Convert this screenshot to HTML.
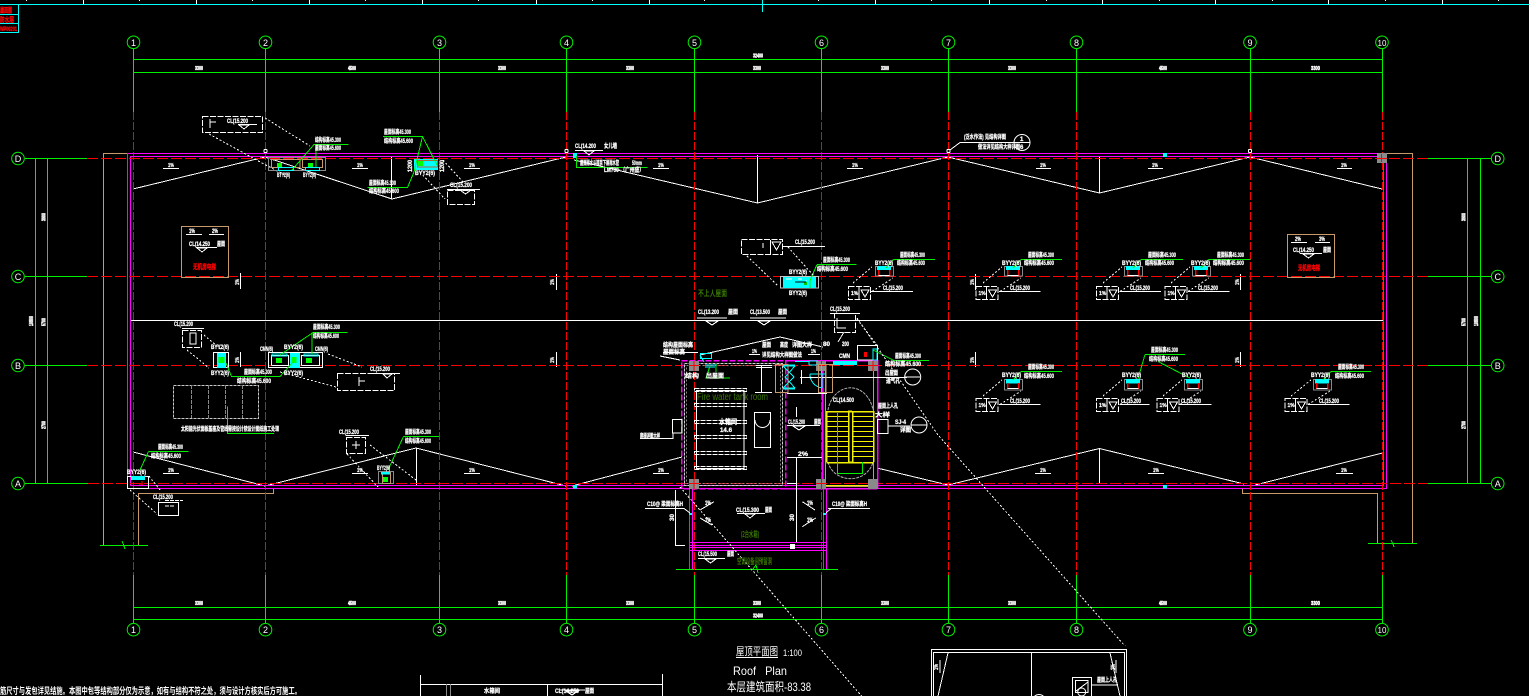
<!DOCTYPE html>
<html><head><meta charset="utf-8"><title>Roof Plan</title>
<style>
html,body{margin:0;padding:0;background:#000;overflow:hidden}
svg{display:block;position:absolute;left:0;top:0}
.t{font:bold 6px "Liberation Sans","Noto Sans CJK SC",sans-serif;fill:#fff;stroke:#fff;stroke-width:.25}
.n{font:9px "Liberation Sans",sans-serif;fill:#fff;text-anchor:middle}
.o{font:bold 8px "Liberation Sans","Noto Sans CJK SC",sans-serif;fill:#3a7800}
.r{font:bold 7px "Liberation Sans","Noto Sans CJK SC",sans-serif;fill:#f00;stroke:#f00;stroke-width:.3}
.w{fill:none;stroke:#fff}.g{fill:none;stroke:#00f000}.m{fill:none;stroke:#f0f}.c{fill:none;stroke:#0ff}.b{fill:none;stroke:#c89a6a}.y{fill:none;stroke:#f0f000}.a{fill:none;stroke:#8a8a8a}
.d{stroke-dasharray:2 2}.bx{stroke-dasharray:6 1.5}
.rd{fill:none;stroke:#f00;stroke-dasharray:8 2}.rh{fill:none;stroke:#f00;stroke-dasharray:11 3}
</style></head><body>
<svg width="1529" height="696" viewBox="0 0 1529 696" xmlns="http://www.w3.org/2000/svg" shape-rendering="crispEdges">
<defs>
<g id="rainT"><rect x=".5" y=".5" width="18" height="9.5" class="a"/><rect x="2" y="0" width="14" height="4" fill="#0ff"/><path d="M3.5 4v5.5M14.5 4v5.5" stroke="#f00" stroke-width="1.5"/><path d="M3.5 9.5H14.5" stroke="#fff"/></g>
<g id="rainB"><rect x=".5" y=".5" width="18" height="10.5" class="a"/><rect x="2" y="0" width="14" height="4.5" fill="#0ff"/><path d="M3.5 4v6M14.5 4v6" stroke="#f00" stroke-width="1.5"/><path d="M3.5 9.5H14.5" stroke="#fff"/></g>
<g id="box"><rect x=".5" y=".5" width="22" height="13" class="w bx"/><path d="M11 1V13M13 4H21L17 11Z" class="w"/><text class="t" x="3" y="9" style="font-size:5px">1%</text></g>
</defs>

<!-- ruler -->
<path d="M0 4.5H1529" class="c"/>
<path d="M83.5 0V4M196.5 0V4M309.5 0V4M422.5 0V4M536.5 0V4M649.5 0V4M875.5 0V4M989.5 0V4M1102.5 0V4M1215.5 0V4M1328.5 0V4M1442.5 0V4M26.5 0V1M139.5 0V1M252.5 0V1M365.5 0V1M478.5 0V1M592.5 0V1M704.5 0V1M818.5 0V1M931.5 0V1M1046.5 0V1M1159.5 0V1M1272.5 0V1M1385.5 0V1M1498.5 0V1" class="w"/>
<path d="M762.5 0V12" class="c"/>
<path d="M18.5 4V32.5H0M0 14.5H18.5M0 23.5H18.5" class="c"/>
<text x="0" y="12.500" class="r" textLength="12" lengthAdjust="spacingAndGlyphs">屋面图</text>
<text x="0" y="22" class="r" textLength="14" lengthAdjust="spacingAndGlyphs">防水层</text>
<text x="0" y="31" class="r" style="font-size:6px" textLength="17" lengthAdjust="spacingAndGlyphs">WP00201</text>

<!-- tan outlines -->
<path d="M130 153.5H103.5V545M1387 153.5H1412.5V543M138.5 545V493.5H273.5V488M1242.5 488V493.5H1377.5V543" class="b"/>
<path d="M100 545.5H148M1368 543.5H1417" class="g"/>
<path d="M122 541L124 546L125 549M1391 540L1393 544L1394 547" class="g"/>

<!-- green grid -->
<path d="M133.5 48V112M265.5 48V112M439.5 48V112M566.5 48V112M694.5 48V112M821.5 48V112M948.5 48V112M1076.5 48V112M1250.5 48V112M1382.5 48V112" class="g"/>
<path d="M133.5 575V623M265.5 575V623M439.5 575V623M566.5 575V623M694.5 575V623M821.5 575V623M948.5 575V623M1076.5 575V623M1250.5 575V623M1382.5 575V623" class="g"/>
<path d="M133 59.5H1382M133 72.5H1382M133 607.5H1382M133 619.5H1382" class="g"/>
<path d="M25 158.5H87M25 276.5H87M25 365.5H87M25 483.5H88M1428 158.5H1491M1428 276.5H1491M1428 365.5H1491M1428 483.5H1491" class="g"/>
<path d="M35.5 158V483M47.5 158V483M1467.5 158V483M1480.5 158V483" class="g"/>
<path d="M676 569.5H838M753 569L756 565L758 573" class="g"/>

<g class="g" shape-rendering="auto" stroke-width="1">
<circle cx="133.5" cy="42.3" r="6.3"/><circle cx="265.5" cy="42.3" r="6.3"/><circle cx="439.5" cy="42.3" r="6.3"/><circle cx="566.5" cy="42.3" r="6.3"/><circle cx="694.5" cy="42.3" r="6.3"/><circle cx="821.5" cy="42.3" r="6.3"/><circle cx="948.5" cy="42.3" r="6.3"/><circle cx="1076.5" cy="42.3" r="6.3"/><circle cx="1250" cy="42.3" r="6.3"/><circle cx="1382" cy="42.3" r="6.3"/>
<circle cx="133.5" cy="629.7" r="6.3"/><circle cx="265.5" cy="629.7" r="6.3"/><circle cx="439.5" cy="629.7" r="6.3"/><circle cx="566.5" cy="629.7" r="6.3"/><circle cx="694.5" cy="629.7" r="6.3"/><circle cx="821.5" cy="629.7" r="6.3"/><circle cx="948.5" cy="629.7" r="6.3"/><circle cx="1076.5" cy="629.7" r="6.3"/><circle cx="1250" cy="629.7" r="6.3"/><circle cx="1382" cy="629.7" r="6.3"/>
<circle cx="18" cy="158.5" r="6.3"/><circle cx="18" cy="276.5" r="6.3"/><circle cx="18" cy="365.5" r="6.3"/><circle cx="18" cy="483.5" r="6.3"/>
<circle cx="1497.7" cy="158.5" r="6.3"/><circle cx="1497.7" cy="276.5" r="6.3"/><circle cx="1497.7" cy="365.5" r="6.3"/><circle cx="1497.7" cy="483.5" r="6.3"/>
</g>
<g class="n" shape-rendering="auto">
<text x="133.5" y="46">1</text><text x="265.5" y="46">2</text><text x="439.5" y="46">3</text><text x="566.5" y="46">4</text><text x="694.5" y="46">5</text><text x="821.5" y="46">6</text><text x="948.5" y="46">7</text><text x="1076.5" y="46">8</text><text x="1250" y="46">9</text><text x="1382" y="46" style="font-size:8px">10</text>
<text x="133.5" y="633">1</text><text x="265.5" y="633">2</text><text x="439.5" y="633">3</text><text x="566.5" y="633">4</text><text x="694.5" y="633">5</text><text x="821.5" y="633">6</text><text x="948.5" y="633">7</text><text x="1076.5" y="633">8</text><text x="1250" y="633">9</text><text x="1382" y="633" style="font-size:8px">10</text>
<text x="18" y="162">D</text><text x="18" y="280">C</text><text x="18" y="369">B</text><text x="18" y="487">A</text>
<text x="1497.7" y="162">D</text><text x="1497.7" y="280">C</text><text x="1497.7" y="369">B</text><text x="1497.7" y="487">A</text>
</g>

<!-- dim labels -->
<g class="t" shape-rendering="auto" style="font-size:5.5px;stroke-width:.5" lengthAdjust="spacingAndGlyphs">
<text x="195" y="70" textLength="8" lengthAdjust="spacingAndGlyphs">3300</text><text x="348" y="70" textLength="8" lengthAdjust="spacingAndGlyphs">4500</text><text x="498" y="70" textLength="8" lengthAdjust="spacingAndGlyphs">3300</text><text x="626" y="70" textLength="8" lengthAdjust="spacingAndGlyphs">3300</text><text x="753" y="70" textLength="8" lengthAdjust="spacingAndGlyphs">3300</text><text x="881" y="70" textLength="8" lengthAdjust="spacingAndGlyphs">3300</text><text x="1008" y="70" textLength="8" lengthAdjust="spacingAndGlyphs">3300</text><text x="1159" y="70" textLength="8" lengthAdjust="spacingAndGlyphs">4500</text><text x="1311" y="70" textLength="9" lengthAdjust="spacingAndGlyphs">3300</text><text x="753" y="57.500" textLength="10" lengthAdjust="spacingAndGlyphs">32400</text>
<text x="195" y="605" textLength="8" lengthAdjust="spacingAndGlyphs">3300</text><text x="348" y="605" textLength="8" lengthAdjust="spacingAndGlyphs">4500</text><text x="498" y="605" textLength="8" lengthAdjust="spacingAndGlyphs">3300</text><text x="626" y="605" textLength="8" lengthAdjust="spacingAndGlyphs">3300</text><text x="753" y="605" textLength="8" lengthAdjust="spacingAndGlyphs">3300</text><text x="881" y="605" textLength="8" lengthAdjust="spacingAndGlyphs">3300</text><text x="1008" y="605" textLength="8" lengthAdjust="spacingAndGlyphs">3300</text><text x="1159" y="605" textLength="8" lengthAdjust="spacingAndGlyphs">4500</text><text x="1311" y="605" textLength="9" lengthAdjust="spacingAndGlyphs">3300</text><text x="753" y="617.500" textLength="10" lengthAdjust="spacingAndGlyphs">32400</text>
<text transform="translate(45.500 221) rotate(-90)" textLength="8" lengthAdjust="spacingAndGlyphs">3900</text><text transform="translate(45.500 326) rotate(-90)" textLength="8" lengthAdjust="spacingAndGlyphs">5700</text><text transform="translate(45.500 429) rotate(-90)" textLength="8" lengthAdjust="spacingAndGlyphs">2700</text><text transform="translate(33 326) rotate(-90)" textLength="10" lengthAdjust="spacingAndGlyphs">10800</text>
<text transform="translate(1465.500 221) rotate(-90)" textLength="8" lengthAdjust="spacingAndGlyphs">3900</text><text transform="translate(1465.500 326) rotate(-90)" textLength="8" lengthAdjust="spacingAndGlyphs">5700</text><text transform="translate(1465.500 429) rotate(-90)" textLength="8" lengthAdjust="spacingAndGlyphs">2700</text><text transform="translate(1478 326) rotate(-90)" textLength="10" lengthAdjust="spacingAndGlyphs">10800</text>
</g>

<!-- white ridge lines -->
<path d="M131 320.5H1383" class="w"/>
<path d="M133 189L265 157L392 199L566 157M574 160L757.5 203L948 157L1099.5 193L1250 157L1382 189" class="w"/>
<path d="M133 452L265 486L416 448L566 486M572 486L682 457M877 468L948 485L1099.5 448.5L1244 484M1255 485L1382.5 453" class="w"/>
<path d="M700 355L780 337L823 347" class="w"/>
<path d="M391.5 157V199M757.5 155V203M1099.5 157V193M416.5 448V486M1099.5 448V483" class="w"/>
<!-- slope labels -->
<path d="M163 168.5H179M352 168.5H368M464 168.5H480M653 168.5H669M847 168.5H863M1036 168.5H1051M1148 168.5H1163M1337 168.5H1352M163 473.5H179M352 473.5H368M464 473.5H480M653 473.5H669M1035 473.5H1051M1148 473.5H1164M1336 473.5H1353M749 354.500H760M808 354.500H820" class="w"/>
<g class="t" shape-rendering="auto" style="font-size:5.5px">
<text x="168" y="167" textLength="6" lengthAdjust="spacingAndGlyphs">1%</text><text x="357" y="167" textLength="6" lengthAdjust="spacingAndGlyphs">1%</text><text x="469" y="167" textLength="6" lengthAdjust="spacingAndGlyphs">1%</text><text x="658" y="167" textLength="6" lengthAdjust="spacingAndGlyphs">1%</text><text x="852" y="167" textLength="6" lengthAdjust="spacingAndGlyphs">1%</text><text x="1040" y="167" textLength="6" lengthAdjust="spacingAndGlyphs">1%</text><text x="1152" y="167" textLength="6" lengthAdjust="spacingAndGlyphs">1%</text><text x="1341" y="167" textLength="6" lengthAdjust="spacingAndGlyphs">1%</text><text x="168" y="472" textLength="6" lengthAdjust="spacingAndGlyphs">1%</text><text x="357" y="472" textLength="6" lengthAdjust="spacingAndGlyphs">1%</text><text x="469" y="472" textLength="6" lengthAdjust="spacingAndGlyphs">1%</text><text x="658" y="472" textLength="6" lengthAdjust="spacingAndGlyphs">1%</text><text x="1040" y="472" textLength="6" lengthAdjust="spacingAndGlyphs">1%</text><text x="1153" y="472" textLength="6" lengthAdjust="spacingAndGlyphs">1%</text><text x="1341" y="472" textLength="6" lengthAdjust="spacingAndGlyphs">1%</text>
<text x="752" y="353" textLength="5" lengthAdjust="spacingAndGlyphs">1%</text><text x="811" y="353" textLength="5" lengthAdjust="spacingAndGlyphs">1%</text>
<text transform="translate(239 285) rotate(-90)" textLength="6" lengthAdjust="spacingAndGlyphs">1%</text><text transform="translate(239 363) rotate(-90)" textLength="6" lengthAdjust="spacingAndGlyphs">1%</text><text transform="translate(554 285) rotate(-90)" textLength="6" lengthAdjust="spacingAndGlyphs">1%</text><text transform="translate(554 363) rotate(-90)" textLength="6" lengthAdjust="spacingAndGlyphs">1%</text><text transform="translate(974 285) rotate(-90)" textLength="6" lengthAdjust="spacingAndGlyphs">1%</text><text transform="translate(974 363) rotate(-90)" textLength="6" lengthAdjust="spacingAndGlyphs">1%</text><text transform="translate(1239 285) rotate(-90)" textLength="6" lengthAdjust="spacingAndGlyphs">1%</text><text transform="translate(1239 363) rotate(-90)" textLength="6" lengthAdjust="spacingAndGlyphs">1%</text>
</g>
<path d="M240.5 273V289M240.5 352V367M556.5 274V290M556.5 352V367M975.5 274V290M975.5 352V367M1240.5 274V290M1240.5 352V367" class="w"/>

<!-- magenta outline -->
<path d="M127.5 488.5V153.5H1386.5V488.5H127.5M130.5 485.5V156.5H1383.5V485.5H130.5" class="m"/>
<!-- red lines -->
<path d="M87 158.5H1428M87 276.5H1428M87 365.5H1428M88 483.5H1428" class="rh"/>
<path d="M133.5 112V575M265.5 112V575M439.5 112V575M566.5 112V575M694.5 112V575M821.5 112V575M948.5 112V575M1076.5 112V575M1250.5 112V575M1382.5 112V575" class="rd"/>

<!-- top-left detail -->
<rect x="202.5" y="116.5" width="60" height="16" class="w bx"/>
<path d="M238 124.5H257M239 125H249L244 129ZM210 119V128M210 122H216" class="w"/>
<text class="t" x="227" y="123" textLength="21" lengthAdjust="spacingAndGlyphs" shape-rendering="auto">CL(15.200</text>
<path d="M265 118L310 146M209 134L262 163L285 175" class="w d"/>
<circle cx="265.5" cy="151" r="1.7" class="w"/><circle cx="566.5" cy="151" r="1.7" class="w"/><circle cx="948.5" cy="151" r="1.7" class="w"/><circle cx="1250" cy="151" r="1.7" class="w"/>
<rect x="268.5" y="157.5" width="57" height="13" class="a"/>
<rect x="271.5" y="159.5" width="28.5" height="8" class="b"/><rect x="302.5" y="159.5" width="20" height="8" class="b"/>
<rect x="278.5" y="167.5" width="15" height="3" class="c"/><rect x="305.5" y="167.5" width="14" height="3" class="c"/>
<rect x="277" y="163" width="5" height="4" fill="#0f0"/><rect x="308" y="163" width="5" height="4" fill="#0f0"/>
<path d="M292 170L314 144.5H348.5M316 144.5V167" class="g"/>
<rect x="414" y="159" width="24" height="11" fill="#0ff"/><rect x="417.5" y="160.5" width="20" height="6.5" class="b" style="stroke:#a06a3a"/>
<rect x="418" y="161" width="5" height="5" fill="#0f0"/>
<path d="M383 136.5H422.5L414 172L407.5 187.5H367.5M422.5 136.5L437 165" class="g"/>
<path d="M443 160L463 182M420 172L445 199" class="w d"/>
<rect x="447.5" y="190.5" width="27" height="14" class="w bx"/>
<path d="M447 189.5H480M460 190H471L465.5 194Z" class="w"/>

<!-- near grid 4 top -->
<rect x="573" y="153" width="4" height="5" fill="#0ff"/>
<rect x="1163" y="153" width="4" height="4" fill="#0ff"/><rect x="1163" y="485" width="4" height="3.5" fill="#0ff"/><rect x="573" y="485" width="4" height="3.5" fill="#0ff"/>
<path d="M576.5 156V167.5H647.5" class="g"/>
<path d="M575 150.5H603M584 151H594L589 155Z" class="w"/>
<!-- near 7 callout -->
<path d="M950 150L960 142.5H1014" class="w"/>
<g shape-rendering="auto"><circle cx="1022" cy="142.5" r="8" class="w"/><path d="M1014 142.5H1030" class="w"/></g>

<!-- column top right -->
<rect x="1377" y="153" width="10" height="10" fill="#8a8a8a"/><path d="M1381.5 154V162M1377 158.5H1387" stroke="#f00"/>

<!-- left tan box -->
<rect x="181.5" y="226.5" width="47" height="51" class="b"/>
<path d="M186 234.5H202M209 234.5H224M196 247.5H217M197 248H207L202 252Z" class="w"/>
<rect x="1287.5" y="234.5" width="47" height="43" class="b"/>
<path d="M1291 242.5H1307M1315 242.5H1330M1300 253.5H1322M1303 254H1314L1308.5 258Z" class="w"/>

<!-- mid-left B -->
<rect x="182.5" y="330.5" width="19" height="17" class="w bx"/>
<path d="M182 328.5H204M190 333V344H196V333Z" class="w"/>
<rect x="213.5" y="352.5" width="15" height="15" class="w"/><rect x="217" y="353" width="9" height="15" fill="#0ff"/><rect x="218.5" y="357" width="6" height="6" fill="#0f0"/>
<path d="M204 335L222 350M187 350L209 368" class="w d"/>
<rect x="268.5" y="352.5" width="54" height="15" class="w"/><rect x="290" y="353" width="10" height="15" fill="#0ff"/>
<rect x="271.5" y="355.5" width="17" height="10" class="w"/><rect x="301.5" y="355.5" width="18" height="10" class="w"/>
<rect x="272" y="354" width="15" height="2" class="c"/><rect x="304" y="354" width="14" height="2" class="c"/>
<rect x="276" y="358" width="6" height="5" fill="#0f0"/><rect x="291.500" y="357" width="5" height="6" fill="#0f0"/><rect x="306" y="358" width="6" height="5" fill="#0f0"/>
<path d="M313 332.5H347.5M313 332.5L280 355M312 332.5V354M226 363L231.500 376.500H280L293 362" class="g"/>
<rect x="337.5" y="373.500" width="57" height="17" class="w bx"/>
<path d="M370 373.500H400M359 377V386M359 381H365M383 374H392L387 378Z" class="w"/>
<path d="M328 354L362 367M280 372L336 387" class="w d"/>
<rect x="173.500" y="385.500" width="85" height="33" class="a d" style="stroke:#c8c8c8;stroke-dasharray:3 1"/>
<path d="M191.500 385V418M208.500 385V418M225.500 385V418M242.500 385V418" class="a" style="stroke-dasharray:4 1"/>
<path d="M227.500 406.500V433.500H274" class="g"/>

<!-- lower-left -->
<path d="M148.500 451.500H188.500M148.500 451.500L140 470" class="g"/>
<rect x="127.500" y="476.500" width="21" height="12" class="w"/><rect x="131" y="476" width="14" height="4" fill="#0ff"/>
<path d="M142 481V485M139 484H143" stroke="#f00"/>
<path d="M149 476L160 490M130 490L157 514" class="w d"/>
<rect x="158.500" y="502.500" width="20" height="13" class="w"/>
<path d="M165 500.500H183M165 506H175" class="w" stroke-dasharray="4 1"/>
<rect x="346.500" y="437.500" width="19" height="16" class="w bx"/>
<path d="M346 435.500H369M356 441V449M352 445H360" class="w"/>
<path d="M370 445L416 480M347 454L378 487" class="w d"/>
<rect x="378.500" y="471.500" width="15" height="12" class="a"/><rect x="382.500" y="472.500" width="8" height="11" class="b"/><rect x="381" y="472" width="9" height="2.500" fill="#0ff"/><rect x="383" y="477" width="5" height="5" fill="#0f0"/>
<path d="M403.500 436.500H439M403.500 436.500L388 470" class="g"/>

<!-- centre upper -->
<rect x="741.500" y="239.500" width="41" height="15" class="w bx"/>
<path d="M770.500 240V254M772 242H781L776.500 250ZM782 246.500H825M763 243V248" class="w"/>
<rect x="780.500" y="276.500" width="38" height="11.500" class="a" style="stroke:#c8c8c8"/><rect x="783" y="277" width="33" height="11" fill="#0ff"/>
<path d="M786 279H792M798 279H802M806 280V281" stroke="#fff"/><rect x="804" y="282" width="3" height="3" fill="#0c0"/>
<path d="M795 282H806" stroke="#000"/>
<path d="M817 264.500H856.500M817 264.500L810 281V288M817 264.500L811 278" class="g"/>
<path d="M747 256L778 286M788 247L813 275" class="w d"/>
<use href="#rainT" x="875" y="266"/>
<use href="#box" x="848" y="286"/>
<path d="M871 291.500H913" class="w"/><path d="M893.500 259.500H935M893.500 259.500L886 268" class="g"/>
<path d="M853 283L872 267M872 291.500L893 278" class="w d"/>

<!-- right groups row C -->
<use href="#rainT" x="1004" y="266"/><use href="#rainT" x="1124" y="266"/><use href="#rainT" x="1192" y="266"/>
<use href="#box" x="975.500" y="286"/><use href="#box" x="1096" y="286"/><use href="#box" x="1164.500" y="286"/>
<path d="M999 291.500H1040.500M1119.500 291.500H1161M1188 291.500H1229.500" class="w"/>
<path d="M983 283L1002 267M1000 291.500L1021 278M1103 283L1122 267M1120 291.500L1141 278M1171 283L1190 267M1188 291.500L1209 278" class="w d"/>
<path d="M1021 259.500H1062M1021 259.500L1013 268M1141 259.500H1183M1141 259.500L1133 268M1208.500 259.500H1250.500M1208.500 259.500L1201 268" class="g"/>
<!-- right groups row B -->
<use href="#rainB" x="1004" y="379"/><use href="#rainB" x="1124" y="379"/><use href="#rainB" x="1184" y="379"/><use href="#rainB" x="1313" y="379"/>
<use href="#box" x="975.500" y="398"/><use href="#box" x="1096" y="398"/><use href="#box" x="1156.500" y="398"/><use href="#box" x="1284.500" y="398"/>
<path d="M999 404.500H1040.500M1119.500 404.500H1149.500M1179 404.500H1211.500M1308 404.500H1349.500" class="w"/>
<path d="M983 396L1002 380M1000 404.500L1021 391M1103 396L1122 380M1120 404.500L1141 391M1163 396L1182 380M1180 404.500L1201 391M1291 396L1311 380M1308 404.500L1330 391" class="w d"/>
<path d="M1021 371.500H1062M1021 371.500L1013 380M1331 371.500H1371M1331 371.500L1323 380M1145 354.500H1185M1145 354.500L1138 379M1158 361.500L1182 374L1190 378" class="g"/>

<!-- building -->
<rect x="681.500" y="360.500" width="104" height="128" class="m" stroke-dasharray="6 2" stroke-width="1.500"/>
<rect x="684.500" y="363.500" width="98" height="122" class="w" stroke-dasharray="3 1" style="stroke:#d0d0d0"/>
<rect x="686.500" y="365.500" width="94" height="118" class="a" stroke-dasharray="2 2"/>
<path d="M822.500 361V489M877.500 360V489M785 488.500H877M785 360.500H877" class="m" stroke-width="1.500"/>
<path d="M825.500 362V486M873.500 362V486M826 486.500H874" class="a" style="stroke:#c89a6a"/>
<path d="M826 485.500H868" class="y"/>
<g shape-rendering="auto">
<path d="M828 410A23 28 0 0 1 873 410M828 462A23 21 0 0 0 873 462" class="a" stroke-dasharray="3 1" style="stroke:#b0b0b0"/>
</g>
<!-- stairs -->
<path d="M826.500 411.500H873.500M826.500 462.500H873.500M826.500 411V462M873.500 411V462M848.500 411V462M852.500 411V462M848 411H852M848 462H852" class="y" stroke-width="1.500"/>
<path d="M826 416.500H848M826 421.500H848M826 426.500H848M826 431.500H848M826 436.500H848M826 441.500H848M826 446.500H848M826 451.500H848M826 456.500H848M853 416.500H873M853 421.500H873M853 426.500H873M853 431.500H873M853 436.500H873M853 441.500H873M853 446.500H873M853 451.500H873M853 456.500H873" class="y"/>
<path d="M837.500 413V473.500H862.500V462" class="g"/>
<!-- columns -->
<g fill="#8a8a8a"><rect x="689" y="361" width="10" height="10"/><rect x="816" y="361" width="10" height="10"/><rect x="868" y="361" width="10" height="10"/><rect x="689" y="479" width="10" height="10"/><rect x="816" y="479" width="10" height="10"/><rect x="868" y="479" width="10" height="10"/></g>
<path d="M694 361V371M689 365.500H699M821.500 361V371M816 365.500H826M873 361V371M868 365.500H878M694 479V489M689 483.500H699M821.500 479V489M816 483.500H826" stroke="#f00" fill="none"/>
<!-- tanks -->
<rect x="696.500" y="390.500" width="47.500" height="78" class="w"/>
<g class="w"><rect x="694.500" y="388.500" width="52" height="3" stroke-dasharray="5 1"/><rect x="694.500" y="403.500" width="52" height="3" stroke-dasharray="5 1"/><rect x="694.500" y="420.500" width="52" height="3" stroke-dasharray="5 1"/><rect x="694.500" y="435.500" width="52" height="3" stroke-dasharray="5 1"/><rect x="694.500" y="451.500" width="52" height="3" stroke-dasharray="5 1"/><rect x="694.500" y="466.500" width="52" height="3" stroke-dasharray="5 1"/></g>
<rect x="754.500" y="412.500" width="16" height="35" class="w"/>
<g shape-rendering="auto"><path d="M755 420A7.500 7.500 0 0 0 770 420" class="w"/></g>
<!-- internal bits -->
<rect x="700.500" y="353.500" width="11" height="5" class="c"/>
<path d="M705 365H717M705 367H715" class="c"/>
<path d="M710 366L706 378H730M716 364V372" class="g"/>
<path d="M700 355L704 362" class="c"/>
<path d="M756 365.500H772M756 367.500H772M761.500 365V392M755 392.500H772" class="w"/>
<rect x="833" y="361" width="24" height="4" fill="#0ff"/>
<rect x="783" y="364.500" width="12" height="2" fill="#0ff"/><rect x="783" y="387.500" width="12" height="2" fill="#0ff"/>
<path d="M795 366L785 377L795 388" class="c"/>
<path d="M783 366L794 377L783 388" class="c"/>
<path d="M795 361.500H809V365M809 361H818M809 365H818" class="c"/>
<path d="M810 374H825M810 374A14 14 0 0 0 822 388M822 374V388" class="c"/>
<path d="M800 377.500H907M801.500 370V384M787 393.500H827M787 457.500H822M796.500 457V492M787 483.500H796M796.500 407V417M787 425.500H820M793 426H805L799 430Z" class="w"/>
<rect x="775.500" y="364.500" width="12.500" height="28" class="b"/><rect x="818.500" y="364.500" width="14" height="28" class="b"/>
<path d="M821.500 364V392M826 364V392" class="b"/>
<rect x="857.500" y="345.500" width="20" height="14.500" class="w"/>
<rect x="873" y="349" width="4" height="11" class="c"/><rect x="864" y="352" width="3" height="5" fill="#f00"/>
<rect x="834.500" y="313.500" width="21" height="19" class="w bx"/>
<path d="M837 318V328H846M830 313.500H860M844 332L838 342" class="w"/>
<path d="M857 319L877 345" class="w d"/>
<path d="M873 350L894 360.500H929" class="g"/>
<path d="M888 426H910" class="w"/>
<rect x="877.500" y="419.500" width="10.500" height="14" class="w"/>
<g shape-rendering="auto"><circle cx="912.700" cy="377" r="8" class="w"/><circle cx="919" cy="425" r="8" class="w"/><path d="M905 377H920M911 425H927" class="w"/></g>
<rect x="672.500" y="419.500" width="9.500" height="13.500" class="w"/>
<path d="M640 438.500H673V433" class="w"/>
<path d="M663 352.500H698M660 356L680 360" class="w"/>
<path d="M697 318H727M750 318H786M706 321H718L712 325ZM758 321H770L764 325Z" class="w"/>
<!-- lower block -->
<path d="M689.500 489V569M692.500 489V569M823.500 489V569M826.500 489V569M689.500 542.500H826.500M689.500 545.500H826.500M689.500 547.500H826.500M689.500 550.500H826.500" class="m"/>
<path d="M645 508.500H684L690 513M675 545.500H685M675.500 490V545M796.500 490V542" class="w"/>
<path d="M828 508.500H870M826 513L831 508.500" class="w"/>
<path d="M700 510L714 501.700M700 518L712 525M802.300 501.700L815 510M802.300 526.700L815.700 518" class="w"/>
<path d="M737 513.500H765M745 514H755L750 518ZM698 558.500H725M705 559H716L710.500 563Z" class="w"/>
<rect x="790" y="544" width="5" height="5" fill="#fff"/>
<rect x="689" y="513" width="3" height="2" fill="#0ff"/><rect x="823" y="513" width="3" height="2" fill="#0ff"/>

<!-- long diagonals -->
<path d="M857 318L938 435L1125 646" class="w d"/>
<path d="M680 487L861.500 696" class="w d"/>

<!-- title -->
<path d="M736 657.500H778" class="w"/>
<!-- bottom table -->
<path d="M420.500 675V696M420 684.500H662M662.500 674V696M547.500 685V696" class="w"/>
<path d="M446.500 684V696M450.500 684V696" class="a"/>
<path d="M560 690H585M566 691H578L572 695Z" class="w"/>
<!-- detail frame -->
<path d="M931.500 696V649.500H1126.500V696M933.500 696V652.500H1124.500V696M1031.500 652.500V696" class="w"/>
<path d="M948 653L938 696M940 660V673M1110 653L1120 696M1116 660V673" class="w"/>
<rect x="1072.500" y="677.500" width="19" height="19" class="w"/>
<rect x="1075.500" y="680.500" width="12.500" height="12" class="w"/>
<path d="M1076 691L1088 682M1091 685H1118" class="w"/>
<g shape-rendering="auto"><circle cx="1081.700" cy="692" r="4" class="w"/><circle cx="1039" cy="701" r="6.500" class="w"/></g>

<!-- TEXT -->
<g shape-rendering="auto">
<g class="t">
<text x="315" y="142" textLength="26" lengthAdjust="spacingAndGlyphs">结构标高45.300</text>
<text x="315" y="150" textLength="26" lengthAdjust="spacingAndGlyphs">屋面标高45.600</text>
<text x="277" y="177" textLength="13" lengthAdjust="spacingAndGlyphs">BYY2(6)</text>
<text x="303" y="177" textLength="13" lengthAdjust="spacingAndGlyphs">BYY2(6)</text>
<text x="384" y="134" textLength="27" lengthAdjust="spacingAndGlyphs">屋面标高45.300</text>
<text x="384" y="143" textLength="29" lengthAdjust="spacingAndGlyphs">结构标高45.600</text>
<text x="369" y="185" textLength="27" lengthAdjust="spacingAndGlyphs">屋面标高45.300</text>
<text x="369" y="193" textLength="30" lengthAdjust="spacingAndGlyphs">结构标高45.600</text>
<text x="415" y="175" textLength="20" lengthAdjust="spacingAndGlyphs">BYY2(6)</text>
<text x="450" y="187" textLength="22" lengthAdjust="spacingAndGlyphs">CL(15.200</text>
<text transform="translate(412 172) rotate(-90)" textLength="12" lengthAdjust="spacingAndGlyphs">1200</text>
<text transform="translate(444 172) rotate(-90)" textLength="12" lengthAdjust="spacingAndGlyphs">1200</text>
<text x="575" y="148" textLength="21" lengthAdjust="spacingAndGlyphs">CL(14.200</text>
<text x="604" y="148" textLength="13" lengthAdjust="spacingAndGlyphs">女儿墙</text>
<text x="580" y="165" textLength="39" lengthAdjust="spacingAndGlyphs">屋面雨水斗接至下层雨水管</text>
<text x="632" y="165" textLength="10" lengthAdjust="spacingAndGlyphs">50mm</text>
<text x="604" y="172" textLength="40" lengthAdjust="spacingAndGlyphs">LM700-（广州盛）</text>
<text x="964" y="139" textLength="42" lengthAdjust="spacingAndGlyphs">(泛水作法) 见结构详图</text>
<text x="978" y="149" textLength="42" lengthAdjust="spacingAndGlyphs">做法详见结构大样详图</text>
<text x="1020" y="141">1</text><text x="1020" y="149">6</text>
<text x="189" y="233" textLength="6" lengthAdjust="spacingAndGlyphs">1%</text><text x="212" y="233" textLength="6" lengthAdjust="spacingAndGlyphs">2%</text>
<text x="189" y="246" textLength="21" lengthAdjust="spacingAndGlyphs">CL(14.250</text><text x="217" y="246" textLength="8" lengthAdjust="spacingAndGlyphs">屋面</text>
<text x="1295" y="241" textLength="6" lengthAdjust="spacingAndGlyphs">2%</text><text x="1319" y="241" textLength="6" lengthAdjust="spacingAndGlyphs">3%</text>
<text x="1293" y="252" textLength="21" lengthAdjust="spacingAndGlyphs">CL(14.250</text><text x="1323" y="252" textLength="8" lengthAdjust="spacingAndGlyphs">屋面</text>
<text x="174" y="326" textLength="19" lengthAdjust="spacingAndGlyphs">CL(15.200</text>
<text x="211" y="349" textLength="18" lengthAdjust="spacingAndGlyphs">BYY2(6)</text><text x="211" y="375" textLength="18" lengthAdjust="spacingAndGlyphs">BYY2(6)</text>
<text x="260" y="351" textLength="13" lengthAdjust="spacingAndGlyphs">CMN(6)</text><text x="284" y="349" textLength="19" lengthAdjust="spacingAndGlyphs">BYY2(6)</text><text x="315" y="351" textLength="13" lengthAdjust="spacingAndGlyphs">CMN(6)</text><text x="284" y="375" textLength="19" lengthAdjust="spacingAndGlyphs">BYY2(6)</text>
<text x="313" y="329" textLength="27" lengthAdjust="spacingAndGlyphs">屋面标高45.300</text><text x="313" y="338" textLength="26" lengthAdjust="spacingAndGlyphs">结构标高45.600</text>
<text x="244" y="374" textLength="28" lengthAdjust="spacingAndGlyphs">屋面标高45.300</text><text x="237" y="383" textLength="34" lengthAdjust="spacingAndGlyphs">结构标高45.600</text>
<text x="370" y="371" textLength="20" lengthAdjust="spacingAndGlyphs">CL(15.200</text>
<text x="181" y="431" textLength="98" lengthAdjust="spacingAndGlyphs">太阳能光伏面板基座及管线需按设计院设计图纸施工处理</text>
<text x="158" y="449" textLength="25" lengthAdjust="spacingAndGlyphs">屋面标高45.300</text><text x="151" y="458" textLength="30" lengthAdjust="spacingAndGlyphs">结构标高45.600</text>
<text x="127" y="474" textLength="19" lengthAdjust="spacingAndGlyphs">BYY2(6)</text>
<text x="153" y="499" textLength="20" lengthAdjust="spacingAndGlyphs">CL(15.200</text>
<text x="339" y="434" textLength="20" lengthAdjust="spacingAndGlyphs">CL(15.200</text>
<text x="405" y="434" textLength="26" lengthAdjust="spacingAndGlyphs">屋面标高45.300</text><text x="405" y="443" textLength="26" lengthAdjust="spacingAndGlyphs">结构标高45.600</text>
<text x="377" y="470" textLength="13" lengthAdjust="spacingAndGlyphs">BYY2(6)</text>
<text x="795" y="244" textLength="20" lengthAdjust="spacingAndGlyphs">CL(15.200</text>
<text x="823" y="262" textLength="27" lengthAdjust="spacingAndGlyphs">屋面标高45.300</text><text x="817" y="271" textLength="31" lengthAdjust="spacingAndGlyphs">结构标高45.600</text>
<text x="789" y="274" textLength="18" lengthAdjust="spacingAndGlyphs">BYY2(6)</text><text x="789" y="295" textLength="18" lengthAdjust="spacingAndGlyphs">BYY2(6)</text>
<text x="883" y="290" textLength="20" lengthAdjust="spacingAndGlyphs">CL(15.200</text><text x="900" y="257" textLength="25" lengthAdjust="spacingAndGlyphs">屋面标高45.300</text><text x="897" y="265" textLength="28" lengthAdjust="spacingAndGlyphs">结构标高45.600</text><text x="875" y="265" textLength="18" lengthAdjust="spacingAndGlyphs">BYY2(6)</text>
<text x="1002" y="265" textLength="19" lengthAdjust="spacingAndGlyphs">BYY2(6)</text><text x="1122" y="265" textLength="19" lengthAdjust="spacingAndGlyphs">BYY2(6)</text><text x="1191" y="265" textLength="19" lengthAdjust="spacingAndGlyphs">BYY2(6)</text>
<text x="1028" y="257" textLength="26" lengthAdjust="spacingAndGlyphs">屋面标高45.300</text><text x="1024" y="265" textLength="30" lengthAdjust="spacingAndGlyphs">结构标高45.600</text>
<text x="1148" y="257" textLength="28" lengthAdjust="spacingAndGlyphs">屋面标高45.300</text><text x="1145" y="265" textLength="29" lengthAdjust="spacingAndGlyphs">结构标高45.600</text>
<text x="1217" y="257" textLength="27" lengthAdjust="spacingAndGlyphs">屋面标高45.300</text><text x="1213" y="265" textLength="31" lengthAdjust="spacingAndGlyphs">结构标高45.600</text>
<text x="1010" y="290" textLength="20" lengthAdjust="spacingAndGlyphs">CL(15.200</text><text x="1130" y="290" textLength="20" lengthAdjust="spacingAndGlyphs">CL(15.200</text><text x="1198" y="290" textLength="20" lengthAdjust="spacingAndGlyphs">CL(15.200</text>
<text x="1028" y="369" textLength="26" lengthAdjust="spacingAndGlyphs">屋面标高45.300</text><text x="1024" y="378" textLength="30" lengthAdjust="spacingAndGlyphs">结构标高45.600</text>
<text x="1151" y="352" textLength="27" lengthAdjust="spacingAndGlyphs">屋面标高45.300</text><text x="1149" y="361" textLength="29" lengthAdjust="spacingAndGlyphs">结构标高45.600</text>
<text x="1338" y="369" textLength="26" lengthAdjust="spacingAndGlyphs">屋面标高45.300</text><text x="1335" y="378" textLength="29" lengthAdjust="spacingAndGlyphs">结构标高45.600</text>
<text x="1002" y="377" textLength="19" lengthAdjust="spacingAndGlyphs">BYY2(6)</text><text x="1122" y="377" textLength="19" lengthAdjust="spacingAndGlyphs">BYY2(6)</text><text x="1182" y="377" textLength="19" lengthAdjust="spacingAndGlyphs">BYY2(6)</text><text x="1311" y="377" textLength="19" lengthAdjust="spacingAndGlyphs">BYY2(6)</text>
<text x="1010" y="403" textLength="20" lengthAdjust="spacingAndGlyphs">CL(15.200</text><text x="1121" y="403" textLength="20" lengthAdjust="spacingAndGlyphs">CL(15.200</text><text x="1181" y="403" textLength="20" lengthAdjust="spacingAndGlyphs">CL(15.200</text><text x="1319" y="403" textLength="20" lengthAdjust="spacingAndGlyphs">CL(15.200</text>
<text x="663" y="347" textLength="30" lengthAdjust="spacingAndGlyphs">结构屋面标高</text><text x="663" y="354" textLength="22" lengthAdjust="spacingAndGlyphs">屋面标高</text>
<text x="698" y="314" textLength="21" lengthAdjust="spacingAndGlyphs">CL(13.200</text><text x="728" y="314" textLength="10" lengthAdjust="spacingAndGlyphs">屋面</text>
<text x="750" y="314" textLength="20" lengthAdjust="spacingAndGlyphs">CL(13.500</text><text x="778" y="314" textLength="9" lengthAdjust="spacingAndGlyphs">屋面</text>
<text x="830" y="311" textLength="20" lengthAdjust="spacingAndGlyphs">CL(15.200</text>
<text x="762" y="347" textLength="9" lengthAdjust="spacingAndGlyphs">屋面</text><text x="780" y="347" textLength="8" lengthAdjust="spacingAndGlyphs">高度</text><text x="792" y="347" textLength="20" lengthAdjust="spacingAndGlyphs">详图大样</text>
<text x="762" y="357" textLength="40" lengthAdjust="spacingAndGlyphs">详见结构大样图做法</text>
<text x="823" y="346" textLength="7" lengthAdjust="spacingAndGlyphs">80</text><text x="842" y="346" textLength="7" lengthAdjust="spacingAndGlyphs">200</text><text x="839" y="358" textLength="11" lengthAdjust="spacingAndGlyphs">CMN</text>
<text x="895" y="358" textLength="26" lengthAdjust="spacingAndGlyphs">屋面标高45.300</text><text x="885" y="366" textLength="36" lengthAdjust="spacingAndGlyphs">结构标高45.600</text>
<text x="885" y="375" textLength="13" lengthAdjust="spacingAndGlyphs">出屋面</text><text x="886" y="383" textLength="14" lengthAdjust="spacingAndGlyphs">通气孔</text>
<text x="878" y="408" textLength="20" lengthAdjust="spacingAndGlyphs">屋面上人孔</text><text x="875" y="417" textLength="15" lengthAdjust="spacingAndGlyphs">大样</text>
<text x="895" y="424" textLength="11" lengthAdjust="spacingAndGlyphs">SJ-4</text><text x="900" y="432" textLength="11" lengthAdjust="spacingAndGlyphs">详图</text>
<text x="706" y="378" textLength="18" lengthAdjust="spacingAndGlyphs">出屋面</text><text x="685" y="378" textLength="14" lengthAdjust="spacingAndGlyphs">结构</text>
<text x="640" y="438" textLength="20" lengthAdjust="spacingAndGlyphs">爬梯详图大样</text>
<text x="719" y="424" textLength="18" lengthAdjust="spacingAndGlyphs" style="font-size:7px">水箱间</text>
<text x="720" y="432" textLength="12" lengthAdjust="spacingAndGlyphs">14.6</text>
<text x="788" y="424" textLength="17" lengthAdjust="spacingAndGlyphs">CL(15.200</text><text x="814" y="424" textLength="7" lengthAdjust="spacingAndGlyphs">屋面</text>
<text x="798" y="456" textLength="10" lengthAdjust="spacingAndGlyphs">2%</text>
<text x="833" y="402" textLength="21" lengthAdjust="spacingAndGlyphs">CL(14.500</text>
<text x="647" y="506" textLength="36" lengthAdjust="spacingAndGlyphs">C10@ 梁面标高H</text>
<text x="832" y="506" textLength="35" lengthAdjust="spacingAndGlyphs">C10@ 梁面标高H</text>
<text x="736" y="512" textLength="23" lengthAdjust="spacingAndGlyphs">CL(15.300</text><text x="765" y="512" textLength="7" lengthAdjust="spacingAndGlyphs">屋面</text>
<text x="698" y="556" textLength="19" lengthAdjust="spacingAndGlyphs">CL(15.500</text><text x="727" y="556" textLength="7" lengthAdjust="spacingAndGlyphs">屋面</text>
<text transform="translate(674 521) rotate(-90)" textLength="7" lengthAdjust="spacingAndGlyphs">30</text><text transform="translate(794 521) rotate(-90)" textLength="7" lengthAdjust="spacingAndGlyphs">30</text>
<text x="705" y="505" textLength="6" lengthAdjust="spacingAndGlyphs">1%</text><text x="705" y="522" textLength="6" lengthAdjust="spacingAndGlyphs">1%</text><text x="807" y="505" textLength="6" lengthAdjust="spacingAndGlyphs">1%</text><text x="807" y="522" textLength="6" lengthAdjust="spacingAndGlyphs">1%</text>
<text x="1097" y="682" textLength="20" lengthAdjust="spacingAndGlyphs">屋面上人孔</text>
<text transform="translate(938 670) rotate(-90)" textLength="6" lengthAdjust="spacingAndGlyphs">1%</text><text transform="translate(1115 670) rotate(-90)" textLength="6" lengthAdjust="spacingAndGlyphs">1%</text>
<text x="555" y="693" textLength="24" lengthAdjust="spacingAndGlyphs">CL(14.250</text><text x="585" y="693" textLength="9" lengthAdjust="spacingAndGlyphs">屋面</text>
<text x="484" y="693" textLength="16" lengthAdjust="spacingAndGlyphs">水箱间</text>
</g>
<text x="193" y="269" class="r" textLength="23" lengthAdjust="spacingAndGlyphs">无机房电梯</text>
<text x="1298" y="270" class="r" textLength="22" lengthAdjust="spacingAndGlyphs">无机房电梯</text>
<text x="698" y="296" class="o" textLength="29" lengthAdjust="spacingAndGlyphs">不上人屋面</text>
<text x="697" y="400" class="o" style="font:10px 'Liberation Sans',sans-serif" textLength="71" lengthAdjust="spacingAndGlyphs">Fire water tank room</text>
<text x="741" y="537" class="o" textLength="18" lengthAdjust="spacingAndGlyphs">(2台水箱)</text>
<text x="737" y="564" class="o" textLength="35" lengthAdjust="spacingAndGlyphs">空调设备间预留洞</text>
<text x="736" y="655" font-family="'Liberation Sans','Noto Sans CJK SC',sans-serif" font-size="11" fill="#fff" textLength="42" lengthAdjust="spacingAndGlyphs">屋顶平面图</text>
<text x="783" y="656" font-family="'Liberation Sans',sans-serif" font-size="9" fill="#fff" textLength="19" lengthAdjust="spacingAndGlyphs">1:100</text>
<text x="733" y="675" font-family="'Liberation Sans',sans-serif" font-size="12" fill="#fff" textLength="54" lengthAdjust="spacingAndGlyphs" xml:space="preserve">Roof   Plan</text>
<text x="727" y="691" font-family="'Liberation Sans','Noto Sans CJK SC',sans-serif" font-size="12" fill="#fff" textLength="84" lengthAdjust="spacingAndGlyphs">本层建筑面积-83.38</text>
<text x="0" y="694" font-family="'Liberation Sans','Noto Sans CJK SC',sans-serif" font-size="9" font-weight="bold" fill="#fff" textLength="301" lengthAdjust="spacingAndGlyphs">筋尺寸与发包详见结施。本图中包等结构部分仅为示意，如有与结构不符之处，须与设计方核实后方可施工。</text>
</g>
</svg>
</body></html>
